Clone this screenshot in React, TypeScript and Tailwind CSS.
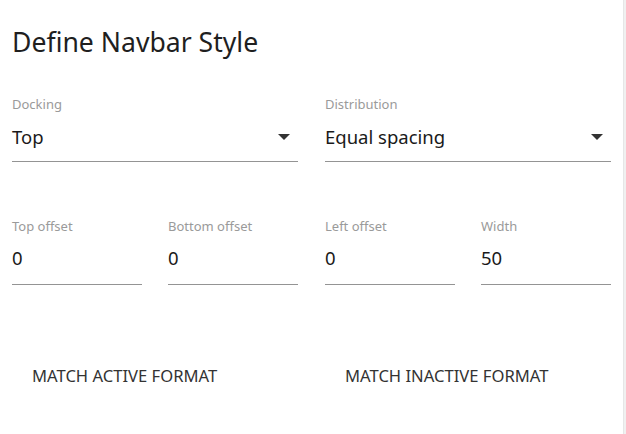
import React from "react";

function Field({
  label,
  value,
  select,
  small,
}: {
  label: string;
  value: string;
  select?: boolean;
  small?: boolean;
}) {
  return (
    <div className="flex flex-col">
      <span className="text-[13px] leading-[16px] text-[#9a9a9a]">{label}</span>
      <div
        className={
          small
            ? "mt-[12px] flex items-center justify-between border-b border-[#949494] pb-[14px]"
            : "mt-[13px] flex items-center justify-between border-b border-[#949494] pb-[12px]"
        }
      >
        <span className="text-[18.5px] leading-[24px] text-[#1a1a1a]">{value}</span>
        {select && (
          <svg width="12" height="6" viewBox="0 0 12 6" className="mr-[8px]">
            <path d="M0 0h12L6 6z" fill="#333" />
          </svg>
        )}
      </div>
    </div>
  );
}

export default function App() {
  return (
    <div
      className="w-[626px] h-[434px] bg-white flex"
      style={{ fontFamily: "'Noto Sans', 'Open Sans', sans-serif" }}
    >
      <div className="flex-1 pl-3 pr-[12px]">
        <h1 className="pt-[24px] text-[26.6px] leading-[36px] text-[#1f1f1f] font-normal">Define Navbar Style</h1>

        <div className="mt-[36px] grid grid-cols-2 gap-x-[27px]">
          <Field label="Docking" value="Top" select />
          <Field label="Distribution" value="Equal spacing" select />
        </div>

        <div className="mt-[56px] grid grid-cols-2 gap-x-[27px]">
          <div className="grid grid-cols-2 gap-x-[26px]">
            <Field label="Top offset" value="0" small />
            <Field label="Bottom offset" value="0" small />
          </div>
          <div className="grid grid-cols-2 gap-x-[26px]">
            <Field label="Left offset" value="0" small />
            <Field label="Width" value="50" small />
          </div>
        </div>

        <div className="mt-[73px] grid grid-cols-2 gap-x-[27px]">
          <div>
            <button className="px-5 py-2 text-[16.6px] leading-[20px] text-[#333] uppercase">Match active format</button>
          </div>
          <div>
            <button className="px-5 py-2 text-[16.6px] leading-[20px] text-[#333] uppercase">Match inactive format</button>
          </div>
        </div>
      </div>
      <div className="w-[3px] bg-[#f0f0f0] border-l border-[#e6e6e6]" />
    </div>
  );
}
